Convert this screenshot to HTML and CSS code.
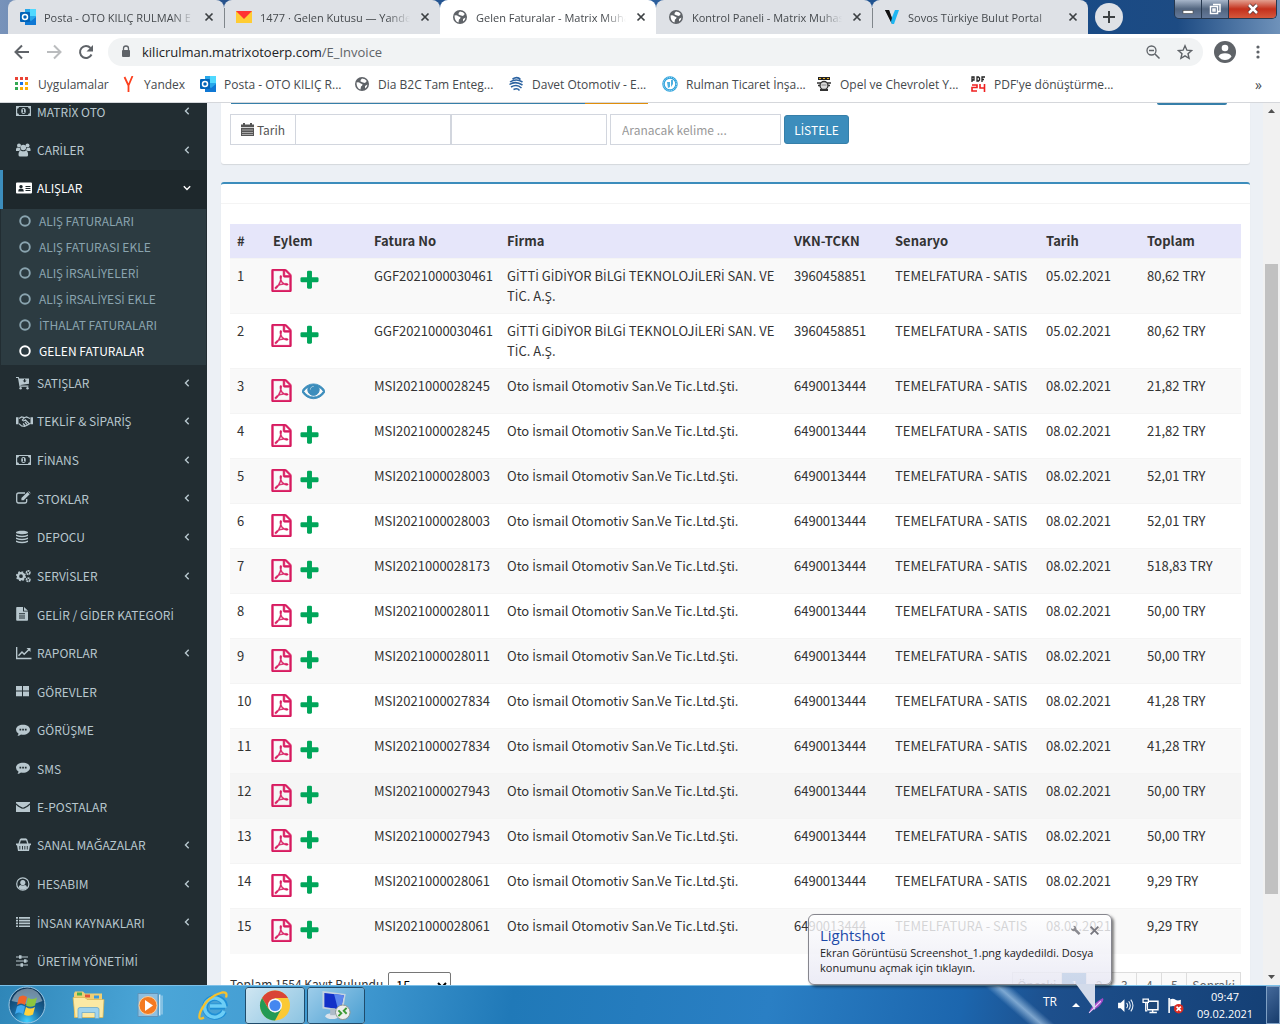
FILE: index.html
```html
<!DOCTYPE html>
<html lang="tr">
<head>
<meta charset="utf-8">
<title>Gelen Faturalar - Matrix Muhasebe</title>
<link rel="stylesheet" href="styles.css">
<script src="glyphs.js" defer></script>
</head>
<body>
<svg class="defs" aria-hidden="true">
  <symbol id="pdf" viewBox="0 0 1792 1792"><path stroke="currentColor" stroke-width="50" d="M1596 380q28 28 48 76t20 88v1152q0 40-28 68t-68 28h-1344q-40 0-68-28t-28-68v-1600q0-40 28-68t68-28h896q40 0 88 20t76 48zm-444-244v376h376q-10-29-22-41l-313-313q-12-12-41-22zm384 1528v-1024h-416q-40 0-68-28t-28-68v-416h-768v1536h1280zm-514-593q33 26 84 56 59-7 117-7 147 0 177 49 16 22 2 52 0 1-1 2l-2 2v1q-6 38-71 38-48 0-115-20t-130-53q-221 24-392 83-153 262-242 262-15 0-28-7l-24-12q-1-1-6-5-10-10-6-36 9-40 56-91.5t132-96.500q14-9 23 6 2 2 2 4 52-85 107-197 68-136 104-262-24-82-30.500-159.500t6.500-127.500q11-40 42-40h22q23 0 35 15 18 21 9 68-2 6-4 8 1 3 1 8v30q-2 123-14 192 55 164 146 238zm-576 411q52-24 137-158-51 40-87.500 84t-49.500 74zm398-920q-15 42-2 132 1-7 7-44 0-3 7-43 1-4 4-8-1-1-1-2t-1-2-1-3q-1-22-13-36 0 1-1 2v2zm-124 661q135-54 284-81-2-1-13-9.500t-16-13.500q-76-67-127-176-27 86-83 197-30 56-45 83zm646-16q-24-24-140-24 76 28 124 28 14 0 18-1 0-1-2-3z"/></symbol>
  <symbol id="plus" viewBox="0 0 1792 1792"><path d="M1600 736v192q0 40-28 68t-68 28h-416v416q0 40-28 68t-68 28h-192q-40 0-68-28t-28-68v-416h-416q-40 0-68-28t-28-68v-192q0-40 28-68t68-28h416v-416q0-40 28-68t68-28h192q40 0 68 28t28 68v416h416q40 0 68 28t28 68z"/></symbol>
  <symbol id="eye" viewBox="0 0 1792 1792"><path stroke="currentColor" stroke-width="70" d="M1664 960q-152-236-381-353 61 104 61 225 0 185-131.500 316.500t-316.500 131.500-316.500-131.500-131.500-316.500q0-121 61-225-229 117-381 353 133 205 333.500 326.500t434.500 121.500 434.500-121.500 333.500-326.500zm-720-384q0-20-14-34t-34-14q-125 0-214.500 89.500t-89.500 214.500q0 20 14 34t34 14 34-14 14-34q0-86 61-147t147-61q20 0 34-14t14-34zm848 384q0 34-20 69-140 230-376.500 368.500t-499.500 138.500-499.500-139-376.500-368q-20-35-20-69t20-69q140-229 376.500-368t499.500-139 499.500 139 376.500 368q20 35 20 69z"/><path d="M896 480a352 352 0 1 0 1 0zM896 528q48 0 48 48t-48 48q-208 0-208 208 0 48-48 48t-48-48q0-304 304-304z" fill-rule="evenodd"/></symbol>
  <symbol id="chev" viewBox="0 0 6 8"><path d="M4.700 .8 1.500 4l3.200 3.200" fill="none" stroke="currentColor" stroke-width="1.400"/></symbol>
  <symbol id="ring" viewBox="0 0 12 12"><circle cx="6" cy="6" r="4.800" fill="none" stroke="currentColor" stroke-width="1.900"/></symbol>
  <symbol id="money" viewBox="0 0 16 14"><path fill-rule="evenodd" d="M0 2h15v10H0zM1.200 4.800v4.400A1.800 1.800 0 0 1 3 11h9a1.800 1.800 0 0 1 1.800-1.800V4.800A1.800 1.800 0 0 1 12 3H3a1.800 1.800 0 0 1-1.800 1.800zM7.500 4a2.300 3 0 1 1 0 6 2.300 3 0 0 1 0-6zM6.500 9h2.200v-.8H8V5h-.7l-1 .8.3.5.4-.2v2.100h-.5z"/></symbol>
  <symbol id="users" viewBox="0 0 16 14"><circle cx="3" cy="2.600" r="2"/><circle cx="11.500" cy="2.600" r="2"/><circle cx="7.300" cy="4.500" r="2.800"/><path d="M0 8V6.300Q.2 4.600 1.400 4.600q1 .8 2.500.3Q4 6.400 4.800 7.200 3.500 7.300 2.800 8zM14.500 8V6.300q-.2-1.700-1.400-1.700-1 .8-2.400.3 0 1.500-.9 2.300 1.300.1 2 .8zM2.500 12c0-3 .8-4.600 2.400-4.600 1.500 1.200 3.300 1.200 4.800 0 1.600 0 2.400 1.600 2.400 4.600q0 1.600-1.600 1.600H4.200Q2.500 13.600 2.500 12z"/></symbol>
  <symbol id="card" viewBox="0 0 16 14"><path fill-rule="evenodd" d="M1 1.500h14q1 0 1 1v9q0 1-1 1H1q-1 0-1-1v-9q0-1 1-1zM2.200 10.500h5.600q0-2.800-1.500-2.800-1.200.8-2.500 0-1.600 0-1.600 2.800zM5 4a1.700 1.700 0 1 0 .01 0zM9.500 5h5v1h-5zM9.500 7h5v1h-5zM9.500 9h5v1h-5z"/></symbol>
  <symbol id="cart" viewBox="0 0 16 14"><path fill-rule="evenodd" d="M0 1h2.700l.5 1.400H13v5.400L4.500 8.900l.1.700h7.800v1.100H3.500L2 2.100H0zM8 3v1.600H6.600l2 2 2-2H9.200V3z"/><circle cx="4.600" cy="12.300" r="1.200"/><circle cx="11.500" cy="12.300" r="1.200"/></symbol>
  <symbol id="shake" viewBox="0 0 18 14"><path d="M0 3.300h2.500v7H0zM14.500 3.300H17v7h-2.500z"/><path d="M3 4.500 5.500 3l3 .7L10.500 3l3.500 1.500M3 9.600l2.600 2.300 3 .5 3-1.400 2.900-1.700M8.500 3.700 6.300 6q1.200 1.700 3-.2L13 9.500M7 9.500l2 2M9 8l2.200 2.700" fill="none" stroke="currentColor" stroke-width="1.200"/></symbol>
  <symbol id="edit" viewBox="0 0 16 14"><path d="M9 2H2.600Q.7 2 .7 3.900v6.200q0 1.900 1.900 1.900h6.200q1.900 0 1.900-1.900V8" fill="none" stroke="currentColor" stroke-width="1.300"/><path d="M11.500 1l2.200 2.200-6 6H5.400V7zM12.100.5q.5-.5 1 0l1.200 1.200q.4.500 0 1z"/></symbol>
  <symbol id="db" viewBox="0 0 16 14"><path d="M0 2.500C0 .2 12 .2 12 2.500S0 4.800 0 2.500zM0 4.500q6 2.400 12 0V6Q6 8.400 0 6zM0 7.500q6 2.400 12 0V9Q6 11.400 0 9zM0 10.500q6 2.400 12 0V12Q6 14.700 0 12z"/></symbol>
  <symbol id="cogs" viewBox="0 0 16 14"><circle cx="5" cy="7.200" r="3" fill="none" stroke="currentColor" stroke-width="2.300"/><circle cx="5" cy="7.200" r="4.200" fill="none" stroke="currentColor" stroke-width="1.700" stroke-dasharray="1.700 1.600"/><circle cx="12.200" cy="3.600" r="1.700" fill="none" stroke="currentColor" stroke-width="1.700" stroke-dasharray="1.800 .4"/><circle cx="12.200" cy="10.800" r="1.700" fill="none" stroke="currentColor" stroke-width="1.700" stroke-dasharray="1.800 .4"/></symbol>
  <symbol id="file" viewBox="0 0 16 14"><path fill-rule="evenodd" d="M1 0h6v4.500h5V13q0 .8-.8.800H1q-.8 0-.8-.8V.8Q.200 0 1 0zM8 0l4 3.700H8zM3 6.200v1h6v-1zM3 8.400v1h6v-1zM3 10.600v1h6v-1z"/></symbol>
  <symbol id="chart" viewBox="0 0 16 14"><path d="M.6 1v11.400H15.500M2.500 9.800 6 6l2.200 2.200L13 3.500" fill="none" stroke="currentColor" stroke-width="1.500"/><path d="M10.500 2h4v4z"/></symbol>
  <symbol id="grid" viewBox="0 0 16 14"><path d="M0 2h6v4.600H0zM7 2h6v4.600H7zM0 7.600h6v4.600H0zM7 7.600h6v4.600H7z"/></symbol>
  <symbol id="talk" viewBox="0 0 16 14"><path fill-rule="evenodd" d="M7 1.800c3.800 0 7 2 7 4.900s-3.200 5-7 5q-1 0-2-.2-1.500 1.300-3.500 1.400.9-1 1-2.400Q0 9 0 6.700c0-2.900 3.200-4.900 7-4.900zM3.500 5.700v1.700h1.700V5.700zM6.200 5.700v1.700h1.700V5.700zM8.900 5.700v1.700h1.700V5.700z"/></symbol>
  <symbol id="mail" viewBox="0 0 16 14"><path d="M0 2h14v1.200Q10 7 7 7.700 4 7 0 3.200zM0 4.800q4 3.700 7 4 3-.3 7-4V12H0z"/></symbol>
  <symbol id="basket" viewBox="0 0 16 14"><path d="M3 6 4.500 1.500h6L12 6" fill="none" stroke="currentColor" stroke-width="1.300"/><path fill-rule="evenodd" d="M5 .5h5v1.800H5zM0 5.500h15v1.700h-1L13 13H2L1 7.200H0zM3.400 8v3.500h.9V8zM6 8v3.500h.9V8zM8.400 8v3.500h.9V8zM10.800 8v3.500h.9V8z"/></symbol>
  <symbol id="user" viewBox="0 0 16 14"><circle cx="6.800" cy="7" r="6.100" fill="none" stroke="currentColor" stroke-width="1.200"/><path d="M6.800 3a2.600 2.600 0 1 0 .01 0zM2.500 11q.2-2.800 2.100-2.900 2.200 1.200 4.400 0 1.800.1 2.200 2.900-4 3.600-8.700 0z"/></symbol>
  <symbol id="list" viewBox="0 0 16 14"><path d="M0 2h2v1.700H0zM3 2h11v1.700H3zM0 4.800h2v1.700H0zM3 4.800h11v1.700H3zM0 7.600h2v1.700H0zM3 7.600h11v1.700H3zM0 10.400h2v1.700H0zM3 10.400h11v1.700H3z"/></symbol>
  <symbol id="sliders" viewBox="0 0 16 14"><path d="M0 2.500h12v1H0zM0 6.500h12v1H0zM0 10.500h12v1H0zM3 1.300h2.500v3.400H3zM8 5.300h2.500v3.400H8zM4.500 9.300H7v3.400H4.500z"/></symbol>
  <symbol id="globe" viewBox="0 0 16 16"><circle cx="8" cy="8" r="7" fill="#5f6368"/><path d="M2.500 6.500q2.500-.5 3.500.5t2.500 1q0 2-1.500 2.500l-.5 3Q2.500 12.500 2.500 6.500zM8 2.500q3.500.2 4.800 2.500L11 7 9 6.500 6.500 5.500q-.5-1.500 1.500-3zM11 10l2.500-1.500q-.2 2.500-2.500 4z" fill="#fff"/></symbol>
  <symbol id="outlook" viewBox="0 0 16 16"><path fill="#28a8ea" d="M5 0h11v15H5z"/><path fill="#50d9ff" d="M10 0h6v7h-6z"/><path fill="#0f78d4" d="M5 8l6 4 5-4v8H5z"/><rect y="3" width="10" height="10" rx="1" fill="#0364b8"/><circle cx="5" cy="8" r="2.500" fill="none" stroke="#fff" stroke-width="1.500"/></symbol>
  <symbol id="x" viewBox="0 0 10 10"><path d="M1.500 1.500l7 7M8.500 1.500l-7 7" stroke="currentColor" stroke-width="1.700"/></symbol>
</svg>

<div class="screen">
  <header class="browser">
    <div class="strip">
      <div class="tab"><svg><use href="#outlook"/></svg><span>Posta - OTO KILIÇ RULMAN E</span><button aria-label="Kapat"><svg><use href="#x"/></svg></button></div>
      <div class="tab split"><svg viewBox="0 0 16 16"><path fill="#ffcc33" d="M0 2h16v12H0z"/><path fill="#f33" d="M0 2h16L8 10z"/></svg><span>1477 · Gelen Kutusu — Yandex</span><button aria-label="Kapat"><svg><use href="#x"/></svg></button></div>
      <div class="tab active"><svg><use href="#globe"/></svg><span>Gelen Faturalar - Matrix Muhasebe</span><button aria-label="Kapat"><svg><use href="#x"/></svg></button></div>
      <div class="tab"><svg><use href="#globe"/></svg><span>Kontrol Paneli - Matrix Muhasebe</span><button aria-label="Kapat"><svg><use href="#x"/></svg></button></div>
      <div class="tab split"><svg viewBox="0 0 16 16"><path d="M1 1h4l3 8v6z"/><path fill="#1fb6f2" d="M15 1h-4L6.500 12 8 15h2z"/><path fill="#111" d="M1 1h4l2.800 8L7 13z"/></svg><span>Sovos Türkiye Bulut Portal</span><button aria-label="Kapat"><svg><use href="#x"/></svg></button></div>
      <button class="newtab" aria-label="Yeni sekme"><svg viewBox="0 0 14 14"><path d="M7 1v12M1 7h12" stroke="#3c4043" stroke-width="2"/></svg></button>
      <div class="winbtns">
        <button aria-label="Küçült"><svg viewBox="0 0 12 12"><rect x="1" y="7.500" width="10" height="3" fill="#fff" stroke="#444" stroke-width=".6"/></svg></button>
        <button aria-label="Önceki boyut"><svg viewBox="0 0 12 12"><path d="M4 1.500h7v7H9M1.500 3.500h7v7h-7zM4 6h2v2H4z" fill="none" stroke="#fff" stroke-width="1.500"/></svg></button>
        <button class="shut" aria-label="Pencereyi kapat"><svg viewBox="0 0 12 12"><path d="M2 2l8 8M10 2l-8 8" stroke="#533" stroke-width="4"/><path d="M2 2l8 8M10 2l-8 8" stroke="#fff" stroke-width="2.500"/></svg></button>
      </div>
    </div>
    <div class="toolbar">
      <button aria-label="Geri"><svg viewBox="0 0 16 16"><path d="M15 8H2M8 1.500 1.500 8 8 14.500" fill="none" stroke="#5f6368" stroke-width="2"/></svg></button>
      <button aria-label="İleri"><svg viewBox="0 0 16 16"><path d="M1 8h13M8 1.500 14.500 8 8 14.500" fill="none" stroke="#babcbe" stroke-width="2"/></svg></button>
      <button aria-label="Yenile"><svg viewBox="0 0 16 16"><path d="M13.500 10.500A6 6 0 1 1 12.500 4" fill="none" stroke="#5f6368" stroke-width="2"/><path d="M15 1v6.500H8.500z" fill="#5f6368"/></svg></button>
      <div class="omni">
        <svg class="lock" viewBox="0 0 10 14"><path d="M2.500 6V3.500a2.500 2.500 0 0 1 5 0V6" fill="none" stroke="#5f6368" stroke-width="1.300"/><rect x="1" y="5" width="8" height="7" rx="1" fill="#5f6368"/></svg>
        <span class="url">kilicrulman.matrixotoerp.com<i>/E_Invoice</i></span>
        <svg viewBox="0 0 16 16"><path d="M10 10l4.500 4.500M4 6.500h5" stroke="#5f6368" stroke-width="1.500"/><circle cx="6.500" cy="6.500" r="4.500" fill="none" stroke="#5f6368" stroke-width="1.300"/></svg>
        <svg viewBox="0 0 16 16"><path d="M8 1.800l1.900 4.400 4.700.4-3.600 3.100 1.100 4.700L8 11.900l-4.100 2.500L5 9.700 1.400 6.600l4.700-.4z" fill="none" stroke="#5f6368" stroke-width="1.400"/></svg>
      </div>
      <svg class="profile" viewBox="0 0 22 22"><circle cx="11" cy="11" r="11" fill="#5f6368"/><circle cx="11" cy="7" r="3.300" fill="#fff"/><path d="M4.500 15.500Q6 12.300 11 12.300t6.500 3.200Q15 19 11 19t-6.500-3.500z" fill="#fff"/></svg>
      <svg class="dots" viewBox="0 0 4 16"><g fill="#5f6368"><circle cx="2" cy="3" r="1.600"/><circle cx="2" cy="8" r="1.600"/><circle cx="2" cy="13" r="1.600"/></g></svg>
    </div>
    <nav class="marks">
      <a href="#" class="w-apps"><svg viewBox="0 0 16 16"><path fill="#ea4335" d="M1 1h3v3H1zM6 1h3v3H6zM11 1h3v3h-3z"/><path fill="#34a853" d="M1 6h3v3H1zM1 11h3v3H1z"/><path fill="#1a73e8" d="M6 6h3v3H6z"/><path fill="#fbae05" d="M11 6h3v3h-3zM6 11h3v3H6zM11 11h3v3h-3z"/></svg>Uygulamalar</a>
      <a href="#" class="w-ya"><svg viewBox="0 0 16 16"><path d="M4.500 1l4 8.500V16M12.500 0l-4 9.500" fill="none" stroke="#fc3f1d" stroke-width="1.800"/></svg>Yandex</a>
      <a href="#"><svg><use href="#outlook"/></svg>Posta - OTO KILIÇ R...</a>
      <a href="#"><svg><use href="#globe"/></svg>Dia B2C Tam Enteg...</a>
      <a href="#"><svg viewBox="0 0 16 16"><g fill="none" stroke="#2b62a0" stroke-width="1.500"><path d="M4.500 3q5-3 8 .5M2 6q6-4 12.500 0M1.500 8.500q6-4 13 .5M3 11q6-3.500 10.500 1M5.500 13.500q4-2 6 1"/></g></svg>Davet Otomotiv - E...</a>
      <a href="#"><svg viewBox="0 0 16 16"><circle cx="8" cy="8" r="6.500" fill="#fff" stroke="#2fa3dc" stroke-width="2.500"/><circle cx="8" cy="8" r="6.600" fill="none" stroke="#bfe5f8" stroke-width="1" stroke-dasharray="1 1"/><path d="M5 6h3v5l-2 1zM9 4h2v4L9 11z" fill="#4fb0e0"/></svg>Rulman Ticaret İnşa...</a>
      <a href="#"><svg viewBox="0 0 16 16"><path d="M2 1h12v3H2z" fill="#222"/><path d="M3 2h2v1H3zM7 2h2v1H7zM11 2h2v1h-2z" fill="#e8b020"/><path d="M1 7h14M2 9.500h12" stroke="#333" stroke-width="1.300"/><circle cx="8" cy="9.500" r="4" fill="#ddd" stroke="#333" stroke-width="1.300"/><path d="M4 14h8" stroke="#333" stroke-width="2"/><path d="M5.500 9h5" stroke="#888"/></svg>Opel ve Chevrolet Y...</a>
      <a href="#"><svg viewBox="0 0 16 16"><path d="M2 6V1h2v3H2M7 1h1.500l1 1v2l-1 1H7zM12 6V1h3M12 3.500h2" fill="none" stroke="#222" stroke-width="1.300"/><path d="M2 9h5v2.500H2V15h5M10 8v4h4.500M14.500 8v8" fill="none" stroke="#f02020" stroke-width="1.600"/></svg>PDF'ye dönüştürme...</a>
      <span class="more">»</span>
    </nav>
  </header>

  <div class="page">
    <aside class="side">
      <ul class="menu">
        <li><a href="#"><svg><use href="#money"/></svg><span>MATRİX OTO</span><svg class="ch"><use href="#chev"/></svg></a></li>
        <li><a href="#"><svg><use href="#users"/></svg><span>CARİLER</span><svg class="ch"><use href="#chev"/></svg></a></li>
        <li class="open"><a href="#"><svg><use href="#card"/></svg><span>ALIŞLAR</span><svg class="ch down"><use href="#chev"/></svg></a></li>
        <li class="sub">
          <ul>
            <li><a href="#"><svg><use href="#ring"/></svg><span>ALIŞ FATURALARI</span></a></li>
            <li><a href="#"><svg><use href="#ring"/></svg><span>ALIŞ FATURASI EKLE</span></a></li>
            <li><a href="#"><svg><use href="#ring"/></svg><span>ALIŞ İRSALİYELERİ</span></a></li>
            <li><a href="#"><svg><use href="#ring"/></svg><span>ALIŞ İRSALİYESİ EKLE</span></a></li>
            <li><a href="#"><svg><use href="#ring"/></svg><span>İTHALAT FATURALARI</span></a></li>
            <li><a href="#" class="here"><svg><use href="#ring"/></svg><span>GELEN FATURALAR</span></a></li>
          </ul>
        </li>
        <li><a href="#"><svg><use href="#cart"/></svg><span>SATIŞLAR</span><svg class="ch"><use href="#chev"/></svg></a></li>
        <li><a href="#"><svg class="wide"><use href="#shake"/></svg><span>TEKLİF &amp; SİPARİŞ</span><svg class="ch"><use href="#chev"/></svg></a></li>
        <li><a href="#"><svg><use href="#money"/></svg><span>FİNANS</span><svg class="ch"><use href="#chev"/></svg></a></li>
        <li><a href="#"><svg><use href="#edit"/></svg><span>STOKLAR</span><svg class="ch"><use href="#chev"/></svg></a></li>
        <li><a href="#"><svg><use href="#db"/></svg><span>DEPOCU</span><svg class="ch"><use href="#chev"/></svg></a></li>
        <li><a href="#"><svg><use href="#cogs"/></svg><span>SERVİSLER</span><svg class="ch"><use href="#chev"/></svg></a></li>
        <li><a href="#"><svg><use href="#file"/></svg><span>GELİR / GİDER KATEGORİ</span></a></li>
        <li><a href="#"><svg><use href="#chart"/></svg><span>RAPORLAR</span><svg class="ch"><use href="#chev"/></svg></a></li>
        <li><a href="#"><svg><use href="#grid"/></svg><span>GÖREVLER</span></a></li>
        <li><a href="#"><svg><use href="#talk"/></svg><span>GÖRÜŞME</span></a></li>
        <li><a href="#"><svg><use href="#talk"/></svg><span>SMS</span></a></li>
        <li><a href="#"><svg><use href="#mail"/></svg><span>E-POSTALAR</span></a></li>
        <li><a href="#"><svg><use href="#basket"/></svg><span>SANAL MAĞAZALAR</span><svg class="ch"><use href="#chev"/></svg></a></li>
        <li><a href="#"><svg><use href="#user"/></svg><span>HESABIM</span><svg class="ch"><use href="#chev"/></svg></a></li>
        <li><a href="#"><svg><use href="#list"/></svg><span>İNSAN KAYNAKLARI</span><svg class="ch"><use href="#chev"/></svg></a></li>
        <li><a href="#"><svg><use href="#sliders"/></svg><span>ÜRETİM YÖNETİMİ</span></a></li>
      </ul>
    </aside>

    <main class="content">
      <section class="box filters">
        <div class="edges"><span class="edge blue"></span><span class="edge orange"></span><span class="edge right"></span></div>
        <form class="search">
          <label class="addon" for="from"><svg viewBox="0 0 13 13"><path fill-rule="evenodd" d="M0 1.500h2V0h2v1.500h5V0h2v1.500h2V4H0zM0 4.700h13V13H0zM1 7.300h11v-.5H1zM1 9.500h11V9H1zM1 11.500h11V11H1z"/></svg>Tarih</label>
          <input id="from" type="text" class="date">
          <input type="text" class="date" aria-label="Bitiş">
          <input type="text" class="word" placeholder="Aranacak kelime ..." aria-label="Aranacak kelime">
          <button type="button" class="go">LİSTELE</button>
        </form>
      </section>
      <section class="box list">
        <div class="head"></div>
        <table>
          <colgroup><col class="c-no"><col class="c-s"><col class="c-inv"><col><col class="c-s"><col class="c-sc"><col class="c-s"><col class="c-s"></colgroup>
          <thead><tr><th>#</th><th>Eylem</th><th>Fatura No</th><th>Firma</th><th>VKN-TCKN</th><th>Senaryo</th><th>Tarih</th><th>Toplam</th></tr></thead>
          <tbody>
            <tr><td>1</td><td><div class="act"><svg class="p"><use href="#pdf"/></svg><svg class="a"><use href="#plus"/></svg></div></td><td>GGF2021000030461</td><td>GİTTİ GİDİYOR BİLGİ TEKNOLOJİLERİ SAN. VE TİC. A.Ş.</td><td>3960458851</td><td>TEMELFATURA - SATIS</td><td>05.02.2021</td><td>80,62 TRY</td></tr>
            <tr><td>2</td><td><div class="act"><svg class="p"><use href="#pdf"/></svg><svg class="a"><use href="#plus"/></svg></div></td><td>GGF2021000030461</td><td>GİTTİ GİDİYOR BİLGİ TEKNOLOJİLERİ SAN. VE TİC. A.Ş.</td><td>3960458851</td><td>TEMELFATURA - SATIS</td><td>05.02.2021</td><td>80,62 TRY</td></tr>
            <tr><td>3</td><td><div class="act"><svg class="p"><use href="#pdf"/></svg><svg class="e"><use href="#eye"/></svg></div></td><td>MSI2021000028245</td><td>Oto İsmail Otomotiv San.Ve Tic.Ltd.Şti.</td><td>6490013444</td><td>TEMELFATURA - SATIS</td><td>08.02.2021</td><td>21,82 TRY</td></tr>
            <tr><td>4</td><td><div class="act"><svg class="p"><use href="#pdf"/></svg><svg class="a"><use href="#plus"/></svg></div></td><td>MSI2021000028245</td><td>Oto İsmail Otomotiv San.Ve Tic.Ltd.Şti.</td><td>6490013444</td><td>TEMELFATURA - SATIS</td><td>08.02.2021</td><td>21,82 TRY</td></tr>
            <tr><td>5</td><td><div class="act"><svg class="p"><use href="#pdf"/></svg><svg class="a"><use href="#plus"/></svg></div></td><td>MSI2021000028003</td><td>Oto İsmail Otomotiv San.Ve Tic.Ltd.Şti.</td><td>6490013444</td><td>TEMELFATURA - SATIS</td><td>08.02.2021</td><td>52,01 TRY</td></tr>
            <tr><td>6</td><td><div class="act"><svg class="p"><use href="#pdf"/></svg><svg class="a"><use href="#plus"/></svg></div></td><td>MSI2021000028003</td><td>Oto İsmail Otomotiv San.Ve Tic.Ltd.Şti.</td><td>6490013444</td><td>TEMELFATURA - SATIS</td><td>08.02.2021</td><td>52,01 TRY</td></tr>
            <tr><td>7</td><td><div class="act"><svg class="p"><use href="#pdf"/></svg><svg class="a"><use href="#plus"/></svg></div></td><td>MSI2021000028173</td><td>Oto İsmail Otomotiv San.Ve Tic.Ltd.Şti.</td><td>6490013444</td><td>TEMELFATURA - SATIS</td><td>08.02.2021</td><td>518,83 TRY</td></tr>
            <tr><td>8</td><td><div class="act"><svg class="p"><use href="#pdf"/></svg><svg class="a"><use href="#plus"/></svg></div></td><td>MSI2021000028011</td><td>Oto İsmail Otomotiv San.Ve Tic.Ltd.Şti.</td><td>6490013444</td><td>TEMELFATURA - SATIS</td><td>08.02.2021</td><td>50,00 TRY</td></tr>
            <tr><td>9</td><td><div class="act"><svg class="p"><use href="#pdf"/></svg><svg class="a"><use href="#plus"/></svg></div></td><td>MSI2021000028011</td><td>Oto İsmail Otomotiv San.Ve Tic.Ltd.Şti.</td><td>6490013444</td><td>TEMELFATURA - SATIS</td><td>08.02.2021</td><td>50,00 TRY</td></tr>
            <tr><td>10</td><td><div class="act"><svg class="p"><use href="#pdf"/></svg><svg class="a"><use href="#plus"/></svg></div></td><td>MSI2021000027834</td><td>Oto İsmail Otomotiv San.Ve Tic.Ltd.Şti.</td><td>6490013444</td><td>TEMELFATURA - SATIS</td><td>08.02.2021</td><td>41,28 TRY</td></tr>
            <tr><td>11</td><td><div class="act"><svg class="p"><use href="#pdf"/></svg><svg class="a"><use href="#plus"/></svg></div></td><td>MSI2021000027834</td><td>Oto İsmail Otomotiv San.Ve Tic.Ltd.Şti.</td><td>6490013444</td><td>TEMELFATURA - SATIS</td><td>08.02.2021</td><td>41,28 TRY</td></tr>
            <tr class="hover"><td>12</td><td><div class="act"><svg class="p"><use href="#pdf"/></svg><svg class="a"><use href="#plus"/></svg></div></td><td>MSI2021000027943</td><td>Oto İsmail Otomotiv San.Ve Tic.Ltd.Şti.</td><td>6490013444</td><td>TEMELFATURA - SATIS</td><td>08.02.2021</td><td>50,00 TRY</td></tr>
            <tr><td>13</td><td><div class="act"><svg class="p"><use href="#pdf"/></svg><svg class="a"><use href="#plus"/></svg></div></td><td>MSI2021000027943</td><td>Oto İsmail Otomotiv San.Ve Tic.Ltd.Şti.</td><td>6490013444</td><td>TEMELFATURA - SATIS</td><td>08.02.2021</td><td>50,00 TRY</td></tr>
            <tr><td>14</td><td><div class="act"><svg class="p"><use href="#pdf"/></svg><svg class="a"><use href="#plus"/></svg></div></td><td>MSI2021000028061</td><td>Oto İsmail Otomotiv San.Ve Tic.Ltd.Şti.</td><td>6490013444</td><td>TEMELFATURA - SATIS</td><td>08.02.2021</td><td>9,29 TRY</td></tr>
            <tr><td>15</td><td><div class="act"><svg class="p"><use href="#pdf"/></svg><svg class="a"><use href="#plus"/></svg></div></td><td>MSI2021000028061</td><td>Oto İsmail Otomotiv San.Ve Tic.Ltd.Şti.</td><td>6490013444</td><td>TEMELFATURA - SATIS</td><td>08.02.2021</td><td>9,29 TRY</td></tr>
          </tbody>
        </table>
        <div class="foot">
          <label for="size">Toplam 1554 Kayıt Bulundu.</label>
          <select id="size"><option>15</option></select>
          <div class="pager"><a href="#">Önceki</a><a href="#" class="on">1</a><a href="#">2</a><a href="#">3</a><a href="#">4</a><a href="#">5</a><a href="#">Sonraki</a></div>
        </div>
      </section>
    </main>
    <div class="scroll">
      <svg viewBox="0 0 17 17"><path d="M5 10h7L8.500 6z"/></svg>
      <div class="track"><div class="thumb"></div></div>
      <svg viewBox="0 0 17 17"><path d="M5 7h7l-3.500 4z"/></svg>
    </div>
  </div>

  <footer class="taskbar">
    <button class="start" aria-label="Başlat"><svg viewBox="0 0 38 38"><defs><radialGradient id="orb" cx=".5" cy=".95" r=".9"><stop offset="0" stop-color="#3fd0ff"/><stop offset=".45" stop-color="#1a6aa0"/><stop offset="1" stop-color="#0d3558"/></radialGradient></defs><circle cx="19" cy="19" r="18" fill="url(#orb)" stroke="#9cc8e4"/><path d="M3.500 15Q8 3 19 2.500T34.500 15Q26 19 19 18T3.500 15z" fill="#fff" opacity=".4"/><path d="M11 11q4-3 8 0l-2 8q-4-3-8 0z" fill="#f0642a"/><path d="M20 11.500q4 3 9 0l-2 8q-5 2.500-9 0z" fill="#8cc63f"/><path d="M9 20.500q4-3 8 0l-2 7.500q-4-3-8 0z" fill="#3fa9f0"/><path d="M18 21q4 3 9 0l-2 7.500q-5 2.500-9 0z" fill="#ffd23c"/></svg></button>
    <button class="task" aria-label="Dosya Gezgini"><svg viewBox="0 0 34 30"><path d="M2 3l1-2h8l2 2h17v24H2z" fill="#f0cf73"/><path d="M5 2h5v3H5z" fill="#4bb04b"/><path d="M13 4h5v3h-5z" fill="#e0563b"/><path d="M22 5h5v3h-5z" fill="#3b9be0"/><path d="M1 7h12l2 2h17l-1 18H3z" fill="#fbe9a4" stroke="#d9b04a" stroke-width=".7"/><path d="M6 28v-9q0-2 2-2h17q2 0 2 2v9h-4v-6H10v6z" fill="#9fd3ee" stroke="#5ea3cc" stroke-width=".7"/></svg></button>
    <button class="task" aria-label="Media Player"><svg viewBox="0 0 34 30"><path d="M4 3h20v23H4z" fill="#8fc0e0" stroke="#5f93b8"/><path d="M25 4h1.500v21H25z" fill="#d8ecf8"/><path d="M27.500 5h1v19h-1z" fill="#bcdcee"/><circle cx="14" cy="15" r="9" fill="#f47a20" stroke="#fbd0a0"/><path d="M11 9.500l8 5.500-8 5.500z" fill="#fff"/></svg></button>
    <button class="task" aria-label="Internet Explorer"><svg viewBox="0 0 34 30"><path d="M29 16H14M28 21A10 9.500 0 1 1 29 16" fill="none" stroke="#1f8fd6" stroke-width="6"/><path d="M28 20.500A10 9.500 0 1 1 28.500 15.500H14" fill="none" stroke="#6ccdf6" stroke-width="3.500"/><path d="M8 27Q1 31 4.500 21 11 6 26 2q6-1 4 5" fill="none" stroke="#f5c12e" stroke-width="2.300"/></svg></button>
    <button class="task on" aria-label="Chrome"><svg viewBox="0 0 30 30"><circle cx="15" cy="15" r="14.500" fill="#fbc934"/><path d="M2.500 7.700A14.500 14.500 0 0 1 27.600 7.800H15L9 18.500z" fill="#d94436"/><path d="M2.500 7.700A14.500 14.500 0 0 0 15 29.500l6-11-6 3.500-6.500-4z" fill="#249a55"/><circle cx="15" cy="15" r="6.800" fill="#f2f6fa"/><circle cx="15" cy="15" r="5.400" fill="#4587f0"/></svg></button>
    <button class="task rdp" aria-label="Uzak Masaüstü"><svg viewBox="0 0 34 32"><path d="M3 1l24 3-3 18-21-3z" fill="#c5d3e0"/><path d="M5 3l20 2.500-3 14.500-17-2.500z" fill="#1230c8"/><path d="M15 4l10 1.500-3 14.500-3-.5z" fill="#5a86ee"/><ellipse cx="13" cy="27" rx="7" ry="3" fill="#dce3ea"/><path d="M11 19h5v7h-5z" fill="#aebbc8"/><circle cx="24" cy="23" r="7.500" fill="#eceeec" stroke="#8e9690"/><path d="M19.500 21l3 3-3 3M28 18.500l-3 3 3 3" fill="none" stroke="#3d9a35" stroke-width="2"/></svg></button>
    <div class="tray">
      <span class="lang">TR</span>
      <svg class="t-up" viewBox="0 0 8 6"><path d="M0 5h8L4 1z" fill="#fff"/></svg>
      <svg class="t-ic" viewBox="0 0 16 16"><path d="M1 15Q3 7 14 1q1 1 0 3Q10 11 3 13z" fill="#a24cc8"/><path d="M1 15L12 4" stroke="#ecd0f8"/></svg>
      <svg class="t-ic gap" viewBox="0 0 16 16"><path d="M1 5.500h2.500L7 2v12L3.500 10.500H1z" fill="#fff"/><path d="M9 5.500q2 2.500 0 5M11 4q3 4 0 8M13 2.500q4 5.500 0 11" fill="none" stroke="#e8f0f8"/></svg>
      <svg class="t-ic" viewBox="0 0 16 16"><path d="M5 4h10v8H5zM7 14.500h7M10 12v2" fill="#1d4677" stroke="#fff" stroke-width="1.400"/><path d="M1 2h5v3H1zM3.500 5v8H5" fill="#1d4677" stroke="#fff" stroke-width="1.200"/></svg>
      <svg class="t-ic" viewBox="0 0 16 16"><path d="M2 1v14" stroke="#fff" stroke-width="1.500"/><path d="M3 2q3-1 5 .5t5 0V9q-3 1-5 0T3 9z" fill="#fff"/><circle cx="11" cy="11" r="4.500" fill="#dc2a20"/><path d="M9 9l4 4M13 9l-4 4" stroke="#fff" stroke-width="1.500"/></svg>
      <div class="clock"><span>09:47</span><span>09.02.2021</span></div>
      <span class="peek"></span>
    </div>
  </footer>

  <div class="balloon">
    <div class="b-head"><strong>Lightshot</strong><svg viewBox="0 0 12 12"><path d="M1 3.500a3 3 0 0 0 4 3l4.500 4.500L11.500 9 7 4.700A3 3 0 0 0 3.500 1L5 3 3.500 4.500z" fill="#8a8a90"/></svg><svg class="bx"><use href="#x"/></svg></div>
    <p>Ekran Görüntüsü Screenshot_1.png kaydedildi. Dosya konumunu açmak için tıklayın.</p>
    <svg class="tail" viewBox="0 0 20 27"><path d="M0 0h19v26z" fill="#d3dbea"/></svg>
  </div>
</div>
</body>
</html>
```
FILE: glyphs.js
```js
// The main face has no dotted capital I (U+0130); set that letter in a face that has it.
const walker = document.createTreeWalker(document.querySelector('.page'), NodeFilter.SHOW_TEXT);
const nodes = [];
while (walker.nextNode()) {
  if (walker.currentNode.data.includes('İ')) nodes.push(walker.currentNode);
}
for (const node of nodes) {
  const parts = node.data.split('İ');
  const out = document.createDocumentFragment();
  parts.forEach((part, i) => {
    if (i > 0) {
      const letter = document.createElement('span');
      letter.className = 'dotted';
      letter.textContent = 'İ';
      out.append(letter);
    }
    out.append(part);
  });
  node.replaceWith(out);
}
```
FILE: styles.css
```css
* { box-sizing: border-box; }
body { margin: 0; font-family: "Noto Sans CJK SC", "Open Sans", sans-serif; }
button { border: 0; background: none; padding: 0; font: inherit; }
a { color: inherit; text-decoration: none; }
ul { list-style: none; margin: 0; padding: 0; }
svg { flex: none; display: block; fill: currentColor; }
.defs { position: absolute; width: 0; height: 0; }
.dotted { font-family: "Open Sans", sans-serif; line-height: 1; }
.screen { position: relative; height: 100vh; display: flex; flex-direction: column; overflow: hidden; }

/* browser frame */
.browser { flex: none; font-family: "Open Sans", sans-serif; font-size: 12px; color: #45494d; background: #fff; border-bottom: 1px solid #d5d7db; }
.strip { display: flex; height: 34px; padding-left: 8px; background: linear-gradient(90deg, #7893ba 0, #1c4a86 20%, #2c5f9d 50%, #174a87 80%, #1d4b83 92%, #6f92ba 100%); }
.tab { flex: 0 1 216px; min-width: 0; display: flex; align-items: center; gap: 8px; padding: 0 8px 0 12px; background: #dee1e6; border-radius: 8px 8px 0 0; font-size: 11px; }
.tab.active { background: #fff; }
.tab.split { background: linear-gradient(#80868b, #80868b) 0 8px / 1px 20px no-repeat #dee1e6; }
.tab > svg { width: 16px; height: 16px; }
.tab span { flex: 1; overflow: hidden; white-space: nowrap; mask-image: linear-gradient(90deg, #000 85%, transparent); }
.tab button, .tab button svg { width: 14px; height: 10px; color: #3c4043; }
.newtab { width: 28px; height: 28px; margin: 3px 7px; border-radius: 50%; background: #dee1e6; display: grid; place-items: center; }
.newtab svg { width: 14px; height: 14px; }
.winbtns { display: flex; margin: 0 3px 0 auto; height: 19px; border: 1px solid #26384f; border-top: 0; border-radius: 0 0 5px 5px; overflow: hidden; }
.winbtns button { width: 27px; display: grid; place-items: center; background: linear-gradient(#a7b6ca, #52657f 50%, #64799a); border-right: 1px solid #26384f; }
.winbtns .shut { width: 47px; border: 0; background: linear-gradient(#e3a090, #c4301c 50%, #d5583c); }
.winbtns svg { width: 12px; height: 12px; }
.toolbar { display: flex; align-items: center; height: 36px; padding: 0 20px 0 14px; gap: 16px; }
.toolbar button, .toolbar button svg { width: 16px; height: 16px; }
.omni { flex: 1; height: 28px; margin: 0 -5px 0 -2px; border-radius: 14px; background: #f1f3f4; display: flex; align-items: center; gap: 16px; padding: 0 10px 0 13px; }
.omni svg { width: 16px; height: 16px; }
.omni .lock { width: 10px; height: 14px; margin-right: -5px; }
.url { flex: 1; font-size: 13px; color: #202124; }
.url i { font-style: normal; color: #5f6368; }
.toolbar .profile { width: 22px; height: 22px; }
.toolbar .dots { width: 4px; height: 16px; margin-left: 4px; }
.marks { display: flex; align-items: center; height: 32px; padding: 0 18px 4px 14px; }
.marks a { display: flex; align-items: center; gap: 8px; width: 154px; white-space: nowrap; }
.marks .w-apps { width: 106px; }
.marks .w-ya { width: 80px; }
.marks svg { width: 16px; height: 16px; }
.more { margin-left: auto; font-size: 14px; }

/* page */
.page { flex: 1; min-height: 0; display: flex; overflow: hidden; background: #ecf0f5; }
.side { flex: none; width: 207px; display: flex; flex-direction: column; background: #222d32; color: #b8c7ce; font-size: 12px; }
.menu { flex: 1; margin: -10px 0 4px; display: flex; flex-direction: column; }
.menu > li { flex: 1 0 34px; display: flex; }
.menu > li > a { flex: 1; display: flex; align-items: center; gap: 5px; padding: 0 15px 2px 13px; border-left: 3px solid transparent; }
.menu > .sub { flex: none; display: block; margin: 0 1px; background: #2c3b41; }
.menu a svg { width: 16px; height: 14px; }
.menu a .wide { width: 18px; margin-right: -2px; }
.menu a .ch { width: 6px; height: 8px; margin-left: auto; margin-right: 2px; }
.menu a .down { transform: rotate(-90deg); }
.menu .open > a { background: #1e282c; border-left-color: #3c8dbc; color: #fff; }
.sub a { display: flex; align-items: center; gap: 8px; height: 26px; padding: 0 0 2px 18px; color: #8aa4af; }
.sub a svg { width: 12px; height: 12px; }
.sub .here { color: #fff; }

.content { flex: 1; min-width: 0; padding: 0 13px 0 14px; font-size: 13px; color: #333; }
.box { background: #fff; border-radius: 3px; box-shadow: 0 1px 1px rgba(0,0,0,.1); padding: 0 9px; }
.filters { height: 61px; margin-bottom: 18px; border-radius: 0 0 3px 3px; }
.edges { display: flex; height: 11px; padding: 0 14px 0 1px; }
.edge { height: 1px; }
.blue { width: 354px; background: #367fa9; }
.orange { width: 63px; background: #e08e0b; }
.right { width: 70px; height: 2px; margin-left: auto; border-radius: 0 0 3px 3px; background: #367fa9; }
.search { display: flex; align-items: center; font-size: 12px; }
.addon { display: flex; align-items: center; justify-content: center; gap: 3px; width: 66px; height: 31px; border: 1px solid #d2d6de; color: #555; }
.addon svg { width: 13px; height: 13px; }
.search input { height: 31px; border: 1px solid #d2d6de; padding: 0 11px; font: inherit; background: #fff; }
.search input::placeholder { color: #999; }
.search .date { width: 156px; }
.search .addon + .date { margin-left: -1px; }
.search .word { width: 171px; margin: 0 3px; }
.go { width: 65px; height: 29px; border: 1px solid #367fa9; border-radius: 3px; background: #3c8dbc; color: #fff; }
.list { border-top: 2px solid #3c8dbc; padding-bottom: 20px; }
.head { height: 20px; margin: 0 -9px 20px; border-bottom: 1px solid #f4f4f4; }
table { width: 100%; table-layout: fixed; border-collapse: collapse; line-height: 20px; }
.c-no { width: 36px; } .c-s { width: 101px; } .c-inv { width: 133px; } .c-sc { width: 151px; }
th, td { text-align: left; vertical-align: top; padding: 7px; }
th { background: #e6e6fa; }
td { height: 45px; border-top: 1px solid #f4f4f4; }
td:nth-child(n+5) { white-space: nowrap; }
tbody tr:nth-child(odd) { background: #f9f9f9; }
tbody .hover { background: #f5f5f5; }
.act { display: flex; gap: 5px; margin: 3px 0 0 -3px; height: 23px; }
.act svg { width: 23px; height: 23px; }
.p { color: #d81b60; } .a { color: #00a65a; }
.act .e { color: #3c8dbc; margin-left: 4px; }
.foot { display: flex; align-items: flex-start; gap: 14px; margin-top: 18px; line-height: 24px; }
.foot label { width: 144px; white-space: nowrap; font-size: 12px; }
.foot select { width: 63px; height: 27px; padding: 0 3px; border: 1px solid #767676; border-radius: 2px; background: #fff; font: inherit; }
.pager { display: flex; margin-left: auto; font-size: 12px; color: #666; }
.pager a { min-width: 26px; padding: 0 5px; text-align: center; border: 1px solid #ddd; margin-left: -1px; background: #fafafa; }
.pager .on { background: #337ab7; color: #fff; }
.scroll { flex: none; width: 17px; display: flex; flex-direction: column; background: #f1f1f1; color: #505050; }
.scroll svg { width: 17px; height: 17px; }
.track { flex: 1; display: flex; flex-direction: column; padding: 0 2px; }
.track::before { content: ""; flex: 144; }
.track::after { content: ""; flex: 74; }
.thumb { flex: 630; background: #c1c1c1; }

/* desktop taskbar */
.taskbar { flex: none; height: 39px; display: flex; align-items: center; padding-left: 8px; border-top: 1px solid #7cc0e8; font-family: "Open Sans", sans-serif; background: linear-gradient(41deg, transparent 40%, rgba(190,220,245,.6) 50%, transparent 60%) right 215px top 0 / 90px 39px no-repeat, linear-gradient(100deg, #2f86b8 0, #4ba6d8 12%, #3f98d0 28%, #2079b8 40%, #2a7fc4 60%, #1c66ae 75%, #1d4f8c 82%, #143f74 100%); }
.start svg { width: 38px; height: 38px; }
.task { width: 60px; height: 37px; margin-right: 2px; display: grid; place-items: center; }
.start { margin-right: 13px; }
.task svg { width: 34px; height: 31px; }
.task.on, .task.rdp { border: 1px solid #d4ecf8; border-radius: 3px; outline: 1px solid #1f4c6c; outline-offset: -1px; }
.task.on { background: linear-gradient(135deg, #cfe6f2, #8cc4e2); }
.task.rdp { width: 58px; background: linear-gradient(135deg, #9dcdea, #4b9fd2); }
.tray { margin-left: auto; display: flex; align-items: center; height: 100%; gap: 8px; color: #fff; font-size: 12px; }
.lang { margin: -8px 7px 0 0; }
.t-up { width: 8px; height: 6px; }
.t-ic { width: 17px; height: 17px; }
.gap { margin-left: 4px; }
.clock { display: flex; flex-direction: column; align-items: center; width: 66px; line-height: 17px; font-size: 11px; }
.peek { width: 14px; height: 100%; border: 1px solid #7fa0c4; background: linear-gradient(135deg, #44699a, #173c6c); }

.balloon { position: absolute; right: 168px; bottom: 39px; width: 304px; height: 71px; padding: 10px 11px; border: 1px solid #86868e; border-radius: 6px; background: linear-gradient(rgba(255,255,255,.8), rgba(232,232,244,.84)); box-shadow: 2px 2px 3px rgba(0,0,0,.5); font-family: "Open Sans", sans-serif; font-size: 11px; line-height: 15px; color: #222; }
.b-head { display: flex; gap: 8px; height: 20px; }
.b-head strong { flex: 1; font-weight: 400; font-size: 15px; line-height: 20px; color: #1d4aa8; }
.b-head svg { width: 11px; height: 11px; color: #77777f; }
.balloon p { margin: 0; white-space: normal; }
.tail { position: absolute; right: 15px; top: 69px; width: 20px; height: 27px; }
```
